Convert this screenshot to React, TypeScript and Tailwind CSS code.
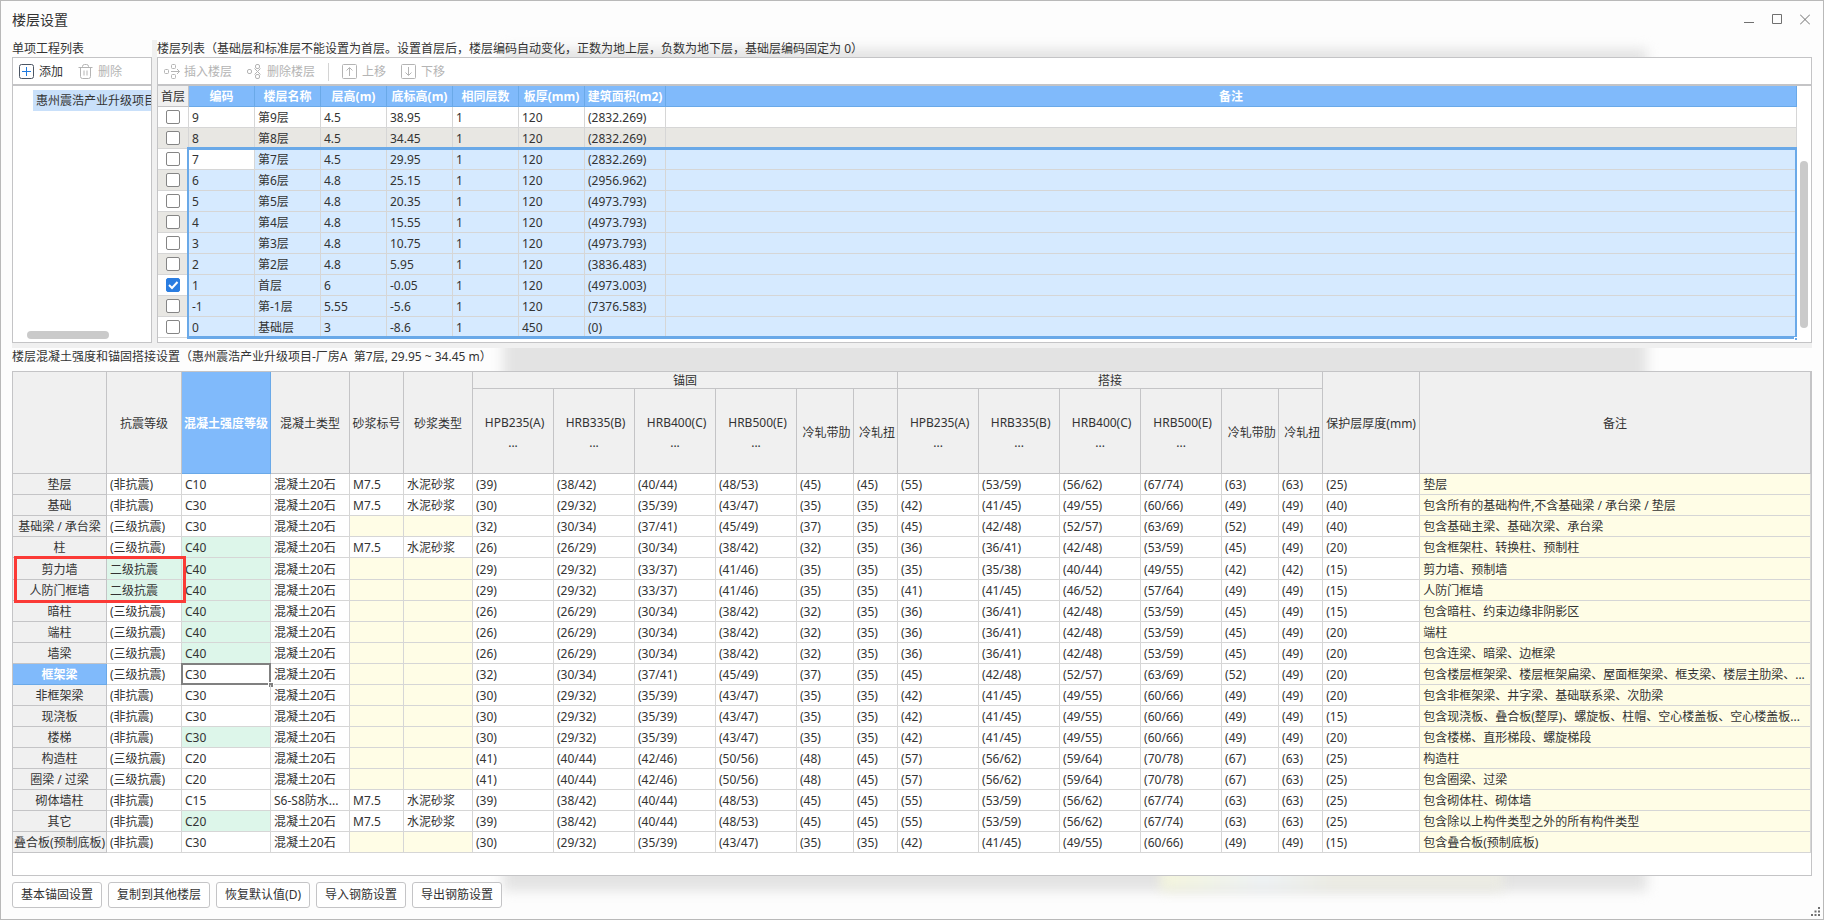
import { useState, type ReactNode } from "react";
import clsx from "clsx";

const floors = [
    ["9", "第9层", "4.5", "38.95", "1", "120", "(2832.269)"],
    ["8", "第8层", "4.5", "34.45", "1", "120", "(2832.269)"],
    ["7", "第7层", "4.5", "29.95", "1", "120", "(2832.269)"],
    ["6", "第6层", "4.8", "25.15", "1", "120", "(2956.962)"],
    ["5", "第5层", "4.8", "20.35", "1", "120", "(4973.793)"],
    ["4", "第4层", "4.8", "15.55", "1", "120", "(4973.793)"],
    ["3", "第3层", "4.8", "10.75", "1", "120", "(4973.793)"],
    ["2", "第2层", "4.8", "5.95", "1", "120", "(3836.483)"],
    ["1", "首层", "6", "-0.05", "1", "120", "(4973.003)"],
    ["-1", "第-1层", "5.55", "-5.6", "1", "120", "(7376.583)"],
    ["0", "基础层", "3", "-8.6", "1", "450", "(0)"],
];

const floorHeads = ["编码", "楼层名称", "层高(m)", "底标高(m)", "相同层数", "板厚(mm)", "建筑面积(m2)", "备注"];

// anchor (6) + lap (6) values shared by several component types
const V39 = "39 38/42 40/44 48/53 45 45 55 53/59 56/62 67/74 63 63";
const V30 = "30 29/32 35/39 43/47 35 35 42 41/45 49/55 60/66 49 49";
const V32 = "32 30/34 37/41 45/49 37 35 45 42/48 52/57 63/69 52 49";
const V26 = "26 26/29 30/34 38/42 32 35 36 36/41 42/48 53/59 45 49";
const V41 = "41 40/44 42/46 50/56 48 45 57 56/62 59/64 70/78 67 63";

type Row = {
    name: string;
    quake: string;
    grade: string;
    changed?: boolean;
    mix?: string;
    mortar?: boolean;
    values: string;
    cover: string;
    note: string;
};

const rows: Row[] = [
    { name: "垫层", quake: "(非抗震)", grade: "C10", mortar: true, values: V39, cover: "25", note: "垫层" },
    { name: "基础", quake: "(非抗震)", grade: "C30", mortar: true, values: V30, cover: "40", note: "包含所有的基础构件,不含基础梁 / 承台梁 / 垫层" },
    { name: "基础梁 / 承台梁", quake: "(三级抗震)", grade: "C30", values: V32, cover: "40", note: "包含基础主梁、基础次梁、承台梁" },
    { name: "柱", quake: "(三级抗震)", grade: "C40", changed: true, mortar: true, values: V26, cover: "20", note: "包含框架柱、转换柱、预制柱" },
    { name: "剪力墙", quake: "二级抗震", grade: "C40", changed: true, values: "29 29/32 33/37 41/46 35 35 35 35/38 40/44 49/55 42 42", cover: "15", note: "剪力墙、预制墙" },
    { name: "人防门框墙", quake: "二级抗震", grade: "C40", changed: true, values: "29 29/32 33/37 41/46 35 35 41 41/45 46/52 57/64 49 49", cover: "15", note: "人防门框墙" },
    { name: "暗柱", quake: "(三级抗震)", grade: "C40", changed: true, values: V26, cover: "15", note: "包含暗柱、约束边缘非阴影区" },
    { name: "端柱", quake: "(三级抗震)", grade: "C40", changed: true, values: V26, cover: "20", note: "端柱" },
    { name: "墙梁", quake: "(三级抗震)", grade: "C40", changed: true, values: V26, cover: "20", note: "包含连梁、暗梁、边框梁" },
    { name: "框架梁", quake: "(三级抗震)", grade: "C30", values: V32, cover: "20", note: "包含楼层框架梁、楼层框架扁梁、屋面框架梁、框支梁、楼层主肋梁、..." },
    { name: "非框架梁", quake: "(非抗震)", grade: "C30", values: V30, cover: "20", note: "包含非框架梁、井字梁、基础联系梁、次肋梁" },
    { name: "现浇板", quake: "(非抗震)", grade: "C30", values: V30, cover: "15", note: "包含现浇板、叠合板(整厚)、螺旋板、柱帽、空心楼盖板、空心楼盖板..." },
    { name: "楼梯", quake: "(非抗震)", grade: "C30", changed: true, values: V30, cover: "20", note: "包含楼梯、直形梯段、螺旋梯段" },
    { name: "构造柱", quake: "(三级抗震)", grade: "C20", values: V41, cover: "25", note: "构造柱" },
    { name: "圈梁 / 过梁", quake: "(三级抗震)", grade: "C20", values: V41, cover: "25", note: "包含圈梁、过梁" },
    { name: "砌体墙柱", quake: "(非抗震)", grade: "C15", mix: "S6-S8防水...", mortar: true, values: V39, cover: "25", note: "包含砌体柱、砌体墙" },
    { name: "其它", quake: "(非抗震)", grade: "C20", changed: true, mortar: true, values: V39, cover: "25", note: "包含除以上构件类型之外的所有构件类型" },
    { name: "叠合板(预制底板)", quake: "(非抗震)", grade: "C30", values: V30, cover: "15", note: "包含叠合板(预制底板)" },
];

const barHeads = [" HPB235(A)\n...", " HRB335(B)\n...", " HRB400(C)\n...", " HRB500(E)\n...", " 冷轧带肋", " 冷轧扭"];

const actions = ["基本锚固设置", "复制到其他楼层", "恢复默认值(D)", "导入钢筋设置", "导出钢筋设置"];

function Icon({ children }: { children: ReactNode }) {
    return (
        <svg width="16" height="16" viewBox="0 0 16 16" fill="none" stroke="currentColor" className="shrink-0">
            {children}
        </svg>
    );
}

function ToolButton({ label, disabled, children }: { label: string; disabled?: boolean; children: ReactNode }) {
    return (
        <button type="button" disabled={disabled} className={clsx("flex items-center gap-1", disabled ? "text-[#b4b4b4]" : "text-[#333]")}>
            <Icon>{children}</Icon>
            {label}
        </button>
    );
}

/* ── project list on the left ── */
function ProjectPanel() {
    return (
        <section className="flex w-[140px] shrink-0 flex-col">
            <h2 className="h-[17px] leading-[18px]">单项工程列表</h2>
            <div className="flex flex-1 flex-col border border-[#c4c4c6] bg-white">
                <div className="flex h-7 items-center gap-[15px] border-b-2 border-[#c4c4c6] pt-0.5 pl-1.5">
                    <ToolButton label="添加">
                        <rect x="0.5" y="0.5" width="14" height="14" rx="2" stroke="#4b5563" />
                        <path d="M7.5 3v9M3 7.5h9" stroke="#1f7ae0" />
                    </ToolButton>
                    <ToolButton label="删除" disabled>
                        <path d="M.5 3.5h14M4.5 3.5v-1a2 2 0 0 1 2-2h2a2 2 0 0 1 2 2v1M2.5 3.5v9a2 2 0 0 0 2 2h6a2 2 0 0 0 2-2v-9M6 6.5v5M9 6.5v5" />
                    </ToolButton>
                </div>
                <div className="flex flex-1 flex-col justify-between overflow-hidden pt-1">
                    <div className="ml-5 overflow-hidden bg-[#c9e0fa] pl-[3px] leading-[21px] whitespace-nowrap">惠州震浩产业升级项目</div>
                    <div className="mb-[3px] ml-3.5 h-2 w-[82px] rounded-full bg-[#cacaca]" />
                </div>
            </div>
        </section>
    );
}

/* ── floor list ── */
function FloorPanel() {
    const [first, setFirst] = useState("1");

    return (
        <section className="flex min-w-0 flex-1 flex-col">
            <h2 className="h-[17px] leading-[18px]">
                楼层列表（基础层和标准层不能设置为首层。设置首层后，楼层编码自动变化，正数为地上层，负数为地下层，基础层编码固定为 0）
            </h2>
            <div className="flex-1 border border-[#c4c4c6] bg-white">
                <div className="flex h-7 items-center gap-[13px] border-b-2 border-[#c4c4c6] pt-0.5 pl-1.5">
                    <div className="flex gap-[15px]">
                        <ToolButton label="插入楼层" disabled>
                            <rect x="0.5" y="5.5" width="4" height="4" rx="1" />
                            <rect x="7.5" y="0.5" width="4" height="4" rx="1" />
                            <rect x="7.5" y="10.5" width="4" height="4" rx="1" />
                            <path d="M7 7.5h8.5M13 5l2.5 2.5L13 10" />
                        </ToolButton>
                        <ToolButton label="删除楼层" disabled>
                            <rect x="0.5" y="5.5" width="4" height="4" rx="1.500" />
                            <rect x="8.5" y="0.5" width="4" height="4" rx="1.500" />
                            <rect x="8.5" y="10.5" width="4" height="4" rx="1.500" />
                            <path d="M7.5 4.500l6 6M13.5 4.500l-6 6" />
                        </ToolButton>
                    </div>
                    <span className="h-[18px] w-px bg-[#d4d4d4]" />
                    <div className="flex gap-[15px]">
                        <ToolButton label="上移" disabled>
                            <rect x="0.5" y="0.5" width="14" height="14" rx="1" />
                            <path d="M7.5 12V4M4.500 6.500l3-3 3 3" />
                        </ToolButton>
                        <ToolButton label="下移" disabled>
                            <rect x="0.5" y="0.5" width="14" height="14" rx="1" />
                            <path d="M7.5 3v8M4.500 8.500l3 3 3-3" />
                        </ToolButton>
                    </div>
                </div>

                <div className="flex pb-1">
                    <div className="relative min-w-0 flex-1">
                        <table className="w-full table-fixed border-separate border-spacing-0 leading-[18px] whitespace-nowrap">
                            <colgroup>
                                <col className="w-[31px]" />
                                <col className="w-[66px]" span={6} />
                                <col className="w-[81px]" />
                                <col />
                            </colgroup>
                            <thead>
                                <tr>
                                    <th className="border-r border-b border-[#c4c4c6] bg-[#f0f0f0] p-0 pt-0.5 font-normal">首层</th>
                                    {floorHeads.map((h) => (
                                        <th key={h} className="border-r border-b border-[#6aa9e8] bg-[#80bafb] p-0 pt-0.5 font-bold text-white">
                                            {h}
                                        </th>
                                    ))}
                                </tr>
                            </thead>
                            <tbody>
                                {floors.map((f, i) => (
                                    <tr key={f[0]} className={i % 2 ? "bg-[#e8e7e3]" : "bg-white"}>
                                        <td className="border-r border-b border-[#d6d6d6] p-0">
                                            <label className="relative flex h-5 items-center justify-center">
                                                <input
                                                    type="checkbox"
                                                    aria-label={f[1]}
                                                    checked={first === f[0]}
                                                    onChange={() => setFirst(f[0])}
                                                    className="size-3.5 appearance-none rounded-[2px] border border-[#858585] bg-white checked:border-[#2a7de1] checked:bg-[#2a7de1]"
                                                />
                                                {first === f[0] && (
                                                    <svg width="14" height="14" viewBox="0 0 14 14" fill="none" stroke="#fff" strokeWidth="2" className="absolute">
                                                        <path d="M3 7l3 3 5.500-6" />
                                                    </svg>
                                                )}
                                            </label>
                                        </td>
                                        {[...f, ""].map((v, c) => (
                                            <td
                                                key={c}
                                                className={clsx("border-r border-b border-[#d6d6d6] p-0 pt-0.5 pl-[3px]", i > 1 && (i === 2 && c === 0 ? "bg-white" : "bg-[#d6eaff]"))}
                                            >
                                                {v}
                                            </td>
                                        ))}
                                    </tr>
                                ))}
                            </tbody>
                        </table>
                        {/* range selection frame over floors 7 .. 0 */}
                        <div className="pointer-events-none absolute top-[61px] right-0 -bottom-px left-[29px] border-x-2 border-y-3 border-[#6aa9e8]">
                            <span className="absolute -right-0.5 -bottom-1 size-[3px] border-t border-l border-white bg-[#6aa9e8]" />
                        </div>
                    </div>
                    <div className="flex w-3.5 shrink-0 justify-center pt-[75px] pb-2.5">
                        <div className="w-2 rounded-full bg-[#cacaca]" />
                    </div>
                </div>
            </div>
        </section>
    );
}

/* ── concrete grade / anchorage table ── */
function StrengthPanel() {
    const head = "border-r border-b border-[#c4c4c6] bg-[#f0f0f0] p-0 pt-0.5 font-normal";
    const groupHead = "border-r border-b border-[#c4c4c6] bg-[#f0f0f0] p-0 pt-0.5 leading-[14px] font-normal";
    const cell = "border-r border-b border-[#d6d6d6] p-0 pt-0.5 pl-[3px]";

    return (
        <div className="flex-1 border border-[#c4c4c6] bg-white pb-[22px]">
            <table className="w-full table-fixed border-separate border-spacing-0 leading-[18px] whitespace-nowrap">
                <colgroup>
                    <col className="w-[94px]" />
                    <col className="w-[75px]" />
                    <col className="w-[89px]" />
                    <col className="w-[79px]" />
                    <col className="w-[54px]" />
                    <col className="w-[69px]" />
                    <col className="w-[81px]" span={4} />
                    <col className="w-[57px]" />
                    <col className="w-[44px]" />
                    <col className="w-[81px]" span={4} />
                    <col className="w-[57px]" />
                    <col className="w-[44px]" />
                    <col className="w-[97px]" />
                    <col />
                </colgroup>
                <thead>
                    <tr className="h-[17px]">
                        <th rowSpan={2} className={head} />
                        <th rowSpan={2} className={head}>抗震等级</th>
                        <th rowSpan={2} className="border-r border-b border-[#6aa9e8] bg-[#80bafb] p-0 pt-0.5 font-bold text-white">混凝土强度等级</th>
                        <th rowSpan={2} className={head}>混凝土类型</th>
                        <th rowSpan={2} className={head}>砂浆标号</th>
                        <th rowSpan={2} className={head}>砂浆类型</th>
                        <th colSpan={6} className={groupHead}>锚固</th>
                        <th colSpan={6} className={groupHead}>搭接</th>
                        <th rowSpan={2} className={head}>保护层厚度(mm)</th>
                        <th rowSpan={2} className={head}>备注</th>
                    </tr>
                    <tr className="h-[85px]">
                        {[...barHeads, ...barHeads].map((h, i) => (
                            <th key={i} className="border-r border-b border-[#c4c4c6] bg-[#f0f0f0] p-0 pt-1 leading-5 font-normal whitespace-pre">{h}</th>
                        ))}
                    </tr>
                </thead>
                <tbody>
                    {rows.map((r) => {
                        const active = r.name === "框架梁";
                        const framed = r.name === "剪力墙";
                        return (
                            <tr key={r.name} className={framed ? "h-[22px]" : "h-[21px]"}>
                                <th
                                    className={clsx(
                                        "relative border-r border-b p-0 pt-0.5",
                                        active ? "border-[#6aa9e8] bg-[#80bafb] font-bold text-white" : "border-[#c4c4c6] bg-[#f0f0f0] font-normal"
                                    )}
                                >
                                    {r.name}
                                    {framed && <span className="pointer-events-none absolute -top-0.5 left-px z-10 h-[47px] w-[172px] border-3 border-[#fb3a36]" />}
                                </th>
                                <td className={clsx(cell, r.quake === "二级抗震" && "bg-[#ddf6ea]")}>{r.quake}</td>
                                <td className={clsx(cell, "relative", r.changed && "bg-[#ddf6ea]")}>
                                    {r.grade}
                                    {active && (
                                        <span className="pointer-events-none absolute -inset-px border-2 border-[#808080]">
                                            <span className="absolute -right-1 -bottom-1 size-1 bg-[#808080] outline outline-white" />
                                        </span>
                                    )}
                                </td>
                                <td className={cell}>{r.mix ?? "混凝土20石"}</td>
                                <td className={clsx(cell, !r.mortar && "bg-[#fffde6]")}>{r.mortar && "M7.5"}</td>
                                <td className={clsx(cell, !r.mortar && "bg-[#fffde6]")}>{r.mortar && "水泥砂浆"}</td>
                                {r.values.split(" ").map((v, i) => (
                                    <td key={i} className={cell}>({v})</td>
                                ))}
                                <td className={cell}>({r.cover})</td>
                                <td className={clsx(cell, "overflow-hidden bg-[#fffde6]")}>{r.note}</td>
                            </tr>
                        );
                    })}
                </tbody>
            </table>
        </div>
    );
}

export default function App() {
    return (
        <main className="relative flex min-h-screen flex-col overflow-hidden border border-[#b9b9b9] bg-[#fdfdfd] px-[11px] pb-[11px] font-['Noto_Sans','Noto_Sans_CJK_SC',sans-serif] text-xs text-[#333]">
            {/* frosted shade behind the window */}
            <div className="absolute top-12 right-44 bottom-7 left-[502px] bg-[#e3e3e3] blur-[6px]" />
            <div className="absolute right-[320px] bottom-7 left-[1160px] h-16 bg-linear-to-r from-[#f3f4dc] via-[#edf1f3] via-30% to-[#ebebe3] to-50% blur-[6px]" />

            <header className="relative flex h-[39px] items-center justify-between pb-0.5">
                <h1 className="text-sm">楼层设置</h1>
                <div className="flex gap-[18px] pr-0.5 text-[#707070]">
                    <button type="button" aria-label="最小化">
                        <svg width="10" height="11" viewBox="0 0 10 11" stroke="currentColor"><path d="M0 8.500h10" /></svg>
                    </button>
                    <button type="button" aria-label="最大化">
                        <svg width="10" height="11" viewBox="0 0 10 11" fill="none" stroke="currentColor"><path d="M.5 .5h9v9h-9z" /></svg>
                    </button>
                    <button type="button" aria-label="关闭">
                        <svg width="10" height="11" viewBox="0 0 10 11" stroke="currentColor"><path d="M0 .5l10 10M10 .5l-10 10" /></svg>
                    </button>
                </div>
            </header>

            <div className="relative flex">
                <ProjectPanel />
                <div className="w-[5px] shrink-0 bg-[#f0f0f0]" />
                <FloorPanel />
            </div>
            <div className="relative h-[5px] bg-[#f0f0f0]" />

            <section className="relative flex flex-1 flex-col">
                <h2 className="h-[23px] leading-[18px] whitespace-pre">楼层混凝土强度和锚固搭接设置（惠州震浩产业升级项目-厂房A  第7层, 29.95 ~ 34.45 m）</h2>
                <StrengthPanel />
            </section>

            <footer className="relative flex gap-1.5 pt-1.5">
                {actions.map((a) => (
                    <button key={a} type="button" className="h-[26px] rounded-[3px] border border-[#c4c4c6] bg-white px-2">
                        {a}
                    </button>
                ))}
            </footer>

            {/* resize grip */}
            <svg width="9" height="9" viewBox="0 0 9 9" fill="#707070" className="absolute right-[3px] bottom-[3px]">
                <path d="M7 0h2v2h-2zM7 3.500h2v2h-2zM3.500 3.500h2v2h-2zM7 7h2v2h-2zM3.500 7h2v2h-2zM0 7h2v2h-2z" />
            </svg>
        </main>
    );
}
